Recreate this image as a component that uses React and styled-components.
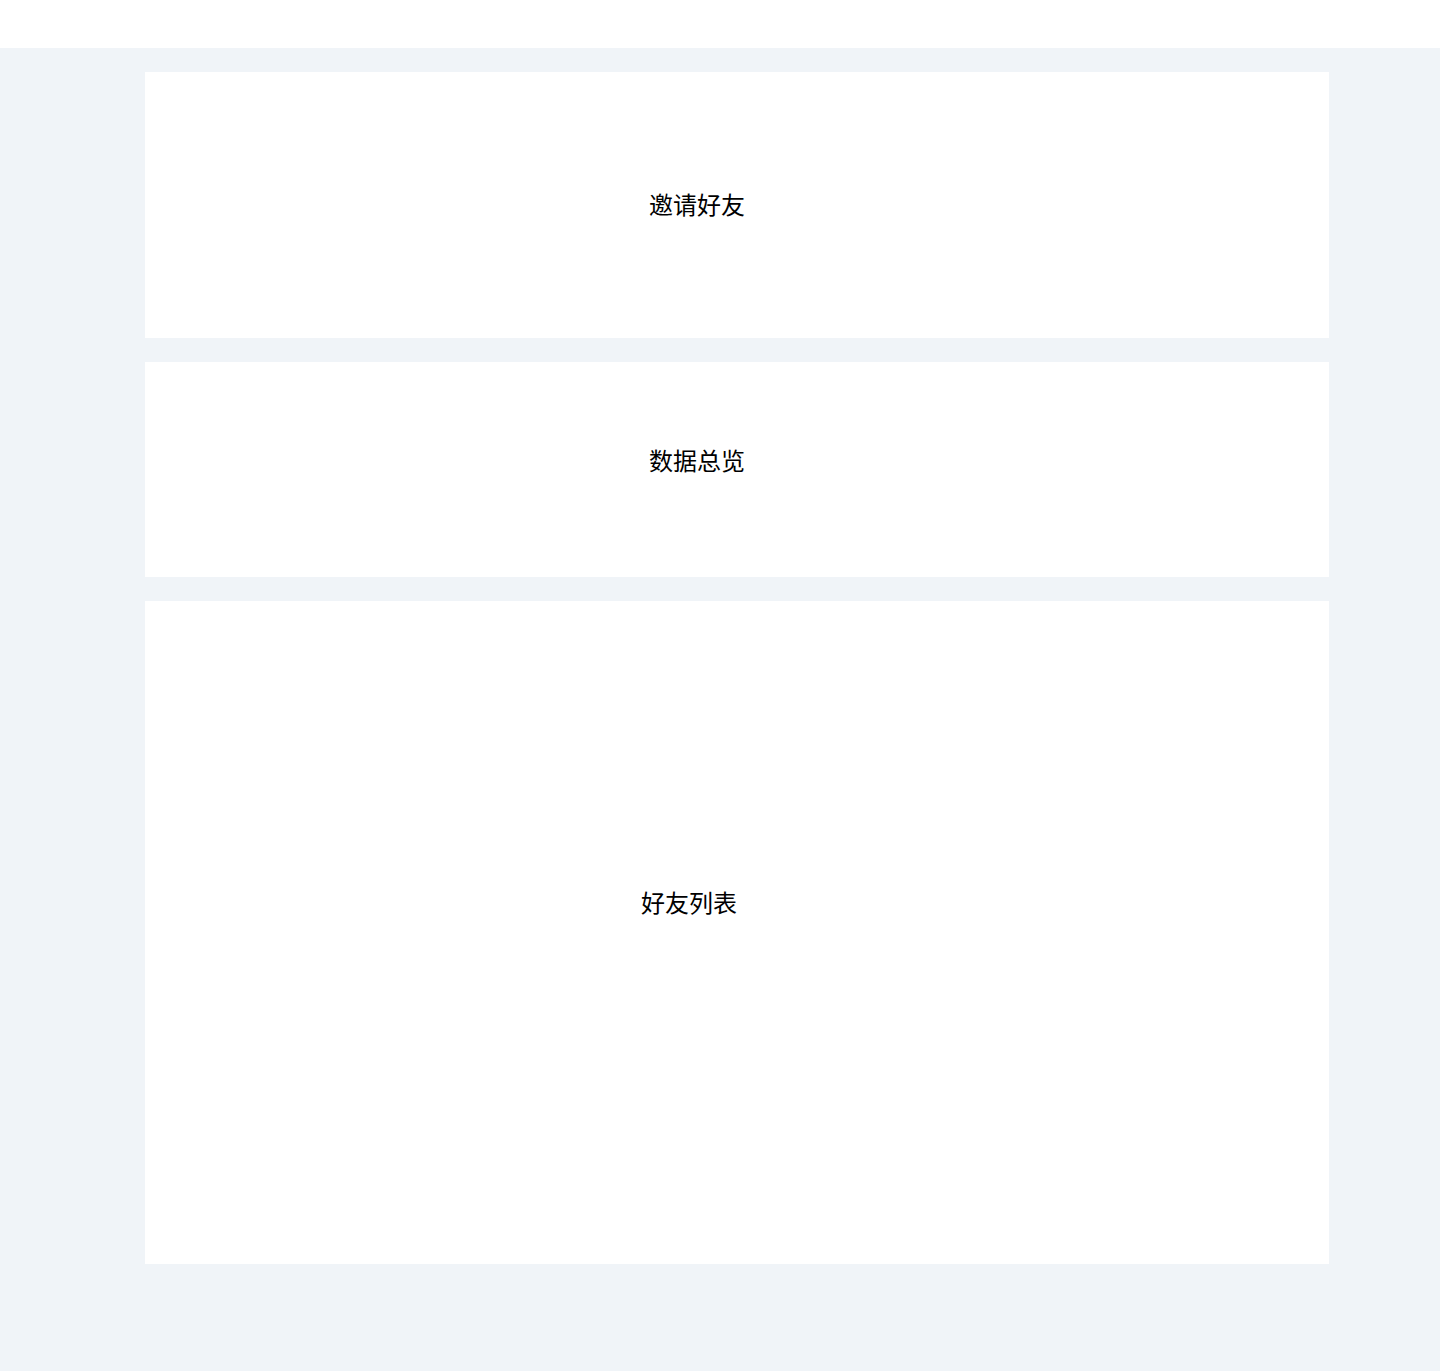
import styled, { createGlobalStyle } from "styled-components";

const GlobalStyle = createGlobalStyle`
  html, body {
    margin: 0;
    padding: 0;
    background: #f0f4f8;
    font-family: "Noto Sans CJK SC", "Noto Sans", sans-serif;
  }
`;

export default function App() {
  return (
    <>
      <GlobalStyle />
      <Header />
      <Main>
        <Card $height={266} $offsetX={80} $offsetY={4}>
          <Title>邀请好友</Title>
        </Card>
        <Card $height={215} $offsetX={80} $offsetY={20}>
          <Title>数据总览</Title>
        </Card>
        <Card $height={663} $offsetX={96} $offsetY={63}>
          <Title>好友列表</Title>
        </Card>
      </Main>
    </>
  );
}

const Header = styled.header`
  height: 48px;
  background: #ffffff;
`;

const Main = styled.main`
  display: flex;
  flex-direction: column;
  align-items: center;
  gap: 24px;
  padding: 24px 0 107px 34px;
  background: #f0f4f8;
`;

const Card = styled.section`
  box-sizing: border-box;
  width: 1184px;
  height: ${(p) => p.$height}px;
  background: #ffffff;
  display: flex;
  align-items: center;
  justify-content: center;
  padding-right: ${(p) => p.$offsetX}px;
  padding-bottom: ${(p) => p.$offsetY}px;
`;

const Title = styled.div`
  font-size: 24px;
  color: #000000;
`;
